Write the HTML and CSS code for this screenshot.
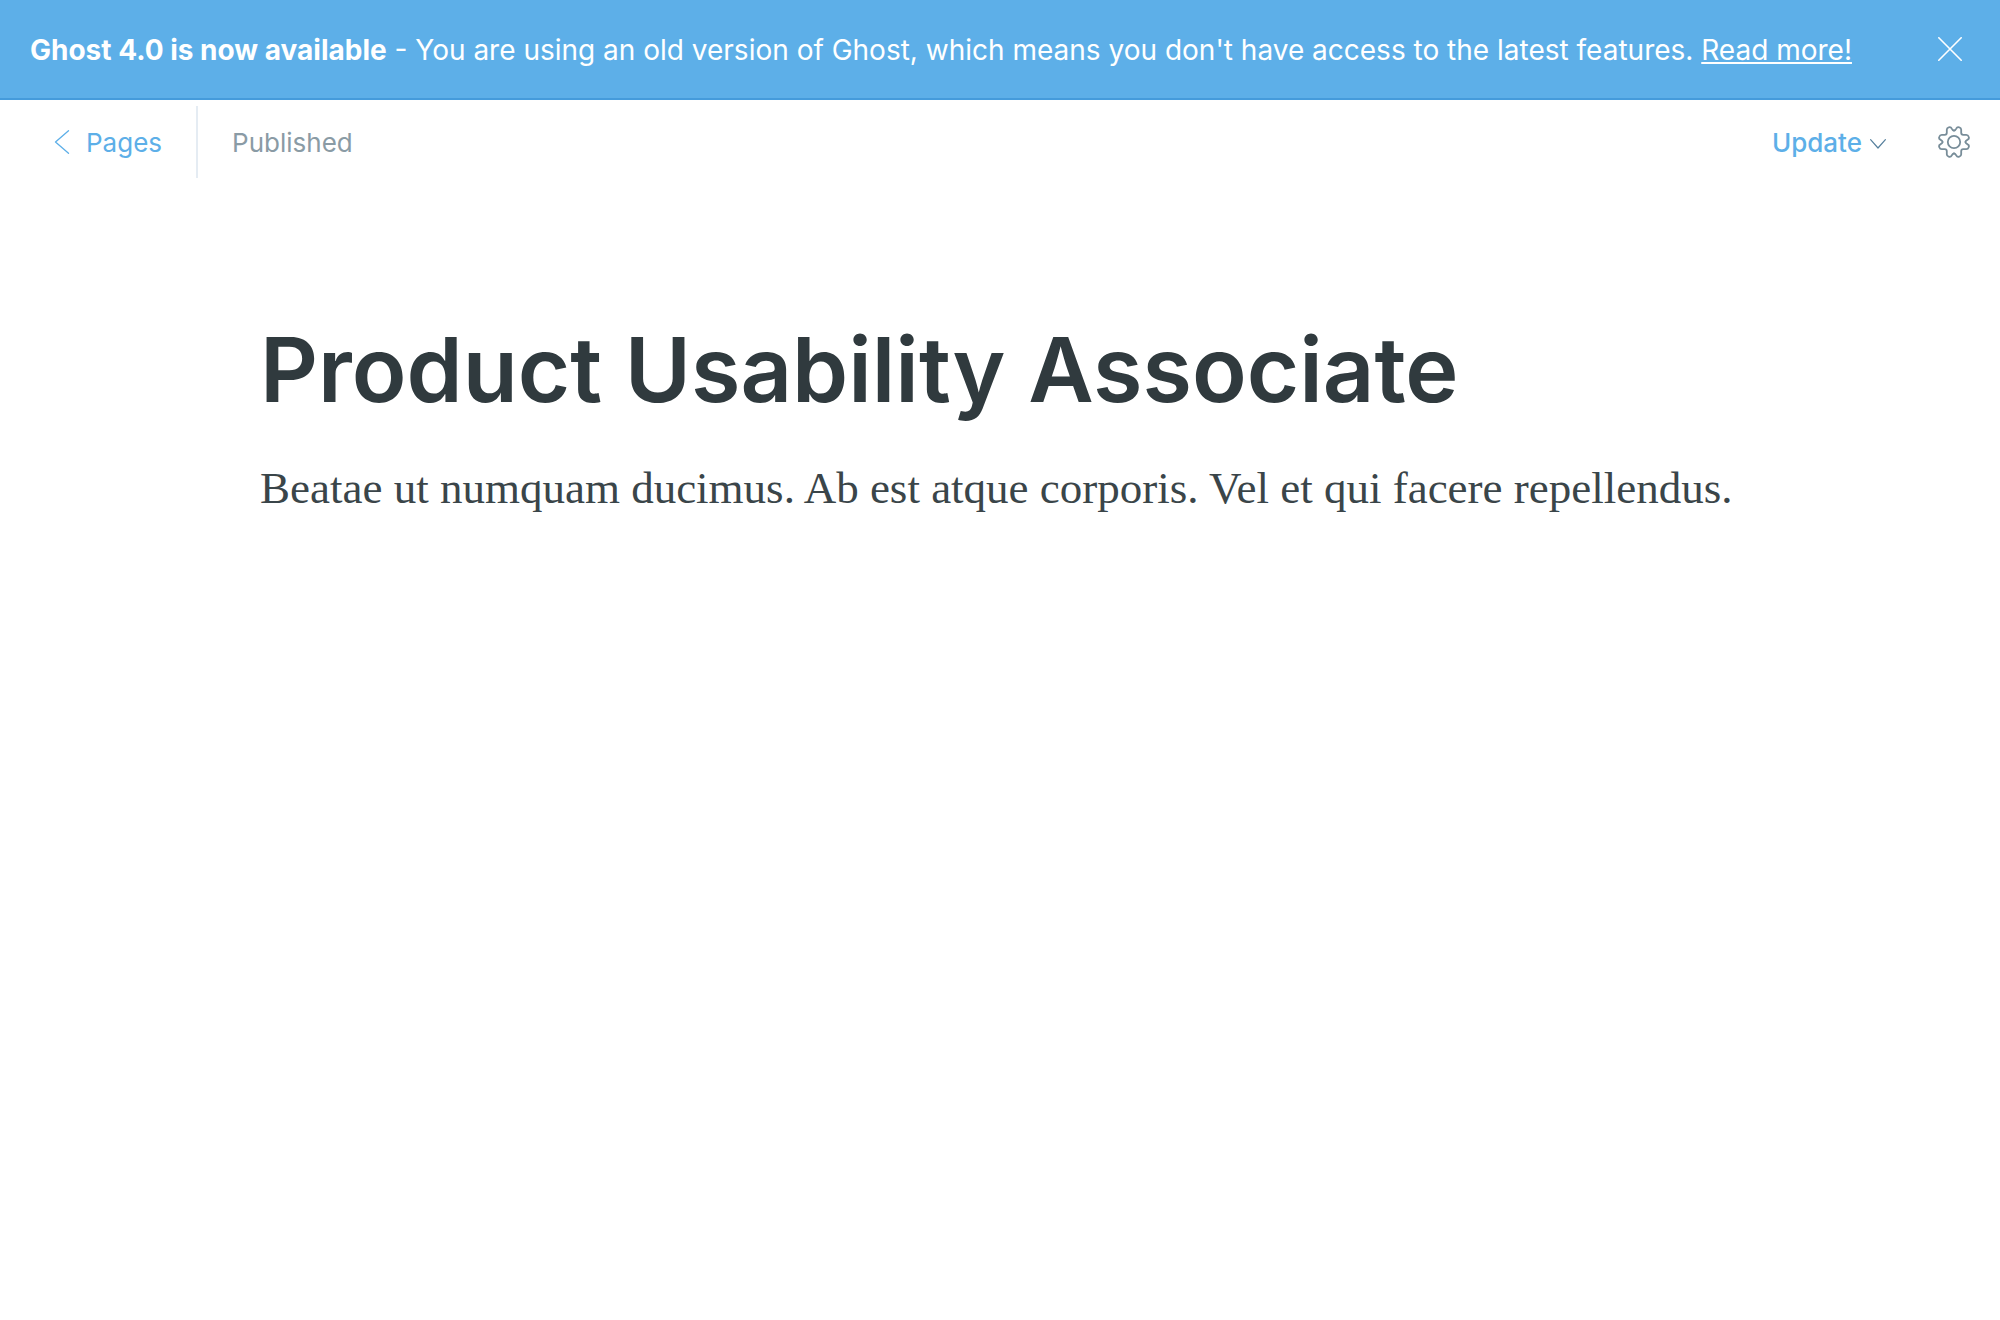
FILE: index.html
```html
<!DOCTYPE html>
<html lang="en">
<head>
<meta charset="utf-8">
<meta name="viewport" content="width=device-width, initial-scale=1">
<title>Product Usability Associate</title>
<link rel="stylesheet" href="styles.css">
</head>
<body>
<aside class="banner">
  <p class="banner-text"><strong>Ghost 4.0 is now available</strong> - You are using an old version of Ghost, which means you don't have access to the latest features. <a href="#release">Read more!</a></p>
  <button class="icon-button banner-close" type="button" aria-label="Close">
    <svg width="24" height="24" viewBox="0 0 24 24" fill="none" stroke="currentColor" stroke-width="1.6" stroke-linecap="round"><path d="M.8.8l22.4 22.4M23.2.8L.8 23.2"/></svg>
  </button>
</aside>
<header class="toolbar">
  <a class="back" href="#pages">
    <svg width="16" height="24" viewBox="0 0 16 24" fill="none" stroke="currentColor" stroke-width="1.3" stroke-linecap="round" stroke-linejoin="round"><path d="M14.5.7L1.5 12l13 11.3"/></svg>
    <span>Pages</span>
  </a>
  <span class="status">Published</span>
  <button class="update" type="button">
    <span>Update</span>
    <svg width="16" height="14" viewBox="0 0 16 14" fill="none" stroke="#557f9c" stroke-width="1.2" stroke-linecap="round" stroke-linejoin="round"><path d="M.6 4.600L8 13l7.400-8.400"/></svg>
  </button>
  <button class="icon-button settings" type="button" aria-label="Settings">
    <svg width="32" height="32" viewBox="0 0 32 32" fill="none" stroke="currentColor" stroke-width="1.8" stroke-linejoin="round" stroke-linecap="round">
      <circle cx="16" cy="16" r="6.2"/>
      <path id="gear-quarter" d="M16 4.500h-.3C14.700 4.500 14.200 3.500 13.600 2.300 13 1 11.800.9 10.700 1.300 9.200 1.800 8.700 2.500 8.800 4V6.800Q8.800 8.800 6.800 8.800H4C2.500 8.700 1.800 9.200 1.300 10.700.9 11.800 1 13 2.300 13.600 3.500 14.200 4.500 14.700 4.500 15.700V16"/>
      <use href="#gear-quarter" transform="rotate(90 16 16)"/>
      <use href="#gear-quarter" transform="rotate(180 16 16)"/>
      <use href="#gear-quarter" transform="rotate(270 16 16)"/>
    </svg>
  </button>
</header>
<main class="editor">
  <h1 class="title">Product Usability Associate</h1>
  <p class="body-text">Beatae ut numquam ducimus. Ab est atque corporis. Vel et qui facere repellendus.</p>
</main>
</body>
</html>
```

FILE: styles.css
```css
* {
  box-sizing: border-box;
}

body {
  margin: 0;
  background: #fff;
  color: #303a3e;
  font-family: Inter, "Liberation Sans", sans-serif;
}

button {
  padding: 0;
  border: 0;
  background: none;
  font: inherit;
  cursor: pointer;
}

svg {
  display: block;
  flex: none;
}

.banner {
  display: flex;
  align-items: center;
  justify-content: space-between;
  min-height: 100px;
  padding: 0 38px 0 30px;
  border-bottom: 2px solid #459bdb;
  background: #5dafe8;
  color: #fff;
}

.banner-text {
  margin: 0;
  padding-top: 2px;
  font-size: 28px;
  line-height: 36px;
}

.banner-text strong {
  font-weight: 700;
}

.banner-text a {
  color: inherit;
}

.icon-button {
  display: flex;
  flex: none;
  color: inherit;
}

.toolbar {
  display: flex;
  align-items: center;
  padding: 6px 30px 0 54px;
  font-size: 26px;
  line-height: 70px;
}

.toolbar span {
  padding-top: 2px;
}

.back {
  display: flex;
  align-items: center;
  gap: 16px;
  padding-right: 34px;
  border-right: 2px solid #e5ecf3;
  color: #5dafe8;
  text-decoration: none;
}

.status {
  padding-left: 34px;
  color: #8a9ba5;
}

.update {
  display: flex;
  align-items: center;
  gap: 8px;
  margin-left: auto;
  color: #5dafe8;
  font-weight: 500;
}

.icon-button.settings {
  margin-left: 52px;
  color: #788d99;
}

.editor {
  width: 74%;
  margin: 0 auto;
  padding-top: 136px;
}

.title {
  margin: 0;
  font-size: 90px;
  font-weight: 600;
  line-height: 112px;
}

.body-text {
  margin: 30px 0 0;
  color: #3a4549;
  font-family: Georgia, "Liberation Serif", serif;
  font-size: 45px;
  line-height: 64px;
}
```
